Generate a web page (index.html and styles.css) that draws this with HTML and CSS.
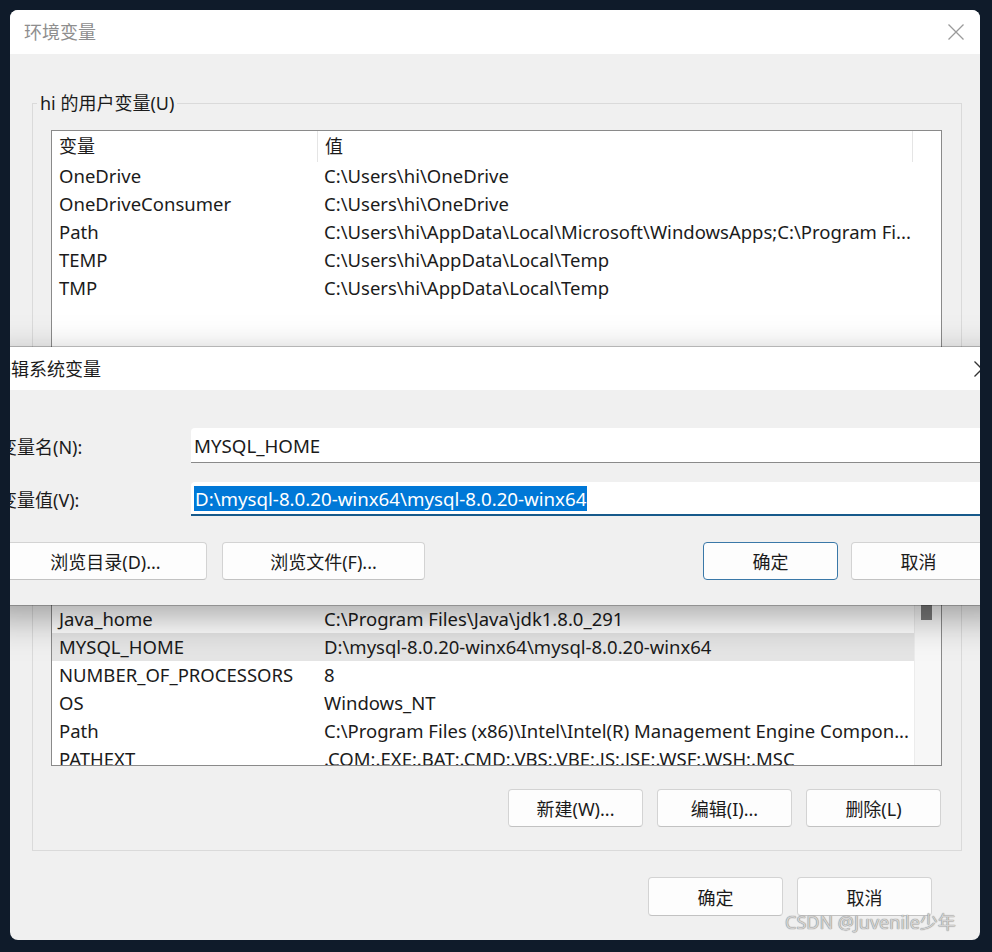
FILE: index.html
```html
<!DOCTYPE html>
<html lang="zh-CN">
<head>
    <meta charset="UTF-8">
    <meta name="viewport" content="width=device-width, initial-scale=1.0">
    <title>环境变量</title>
    <link rel="stylesheet" href="styles.css">
</head>
<body>
    <div class="desktop">
        <div class="window">
            <div class="titlebar">
                <span class="title muted">环境变量</span>
                <svg class="close" width="18" height="18" viewBox="0 0 18 18">
                    <path d="M1.5 1.5L16.5 16.5M16.5 1.5L1.5 16.5"/>
                </svg>
            </div>

            <div class="window-body">
                <fieldset class="group group-user">
                    <legend>hi 的用户变量(U)</legend>
                    <div class="list list-user">
                        <div class="list-head"><span>变量</span><span>值</span><span></span></div>
                        <div class="row"><span>OneDrive</span><span>C:\Users\hi\OneDrive</span></div>
                        <div class="row"><span>OneDriveConsumer</span><span>C:\Users\hi\OneDrive</span></div>
                        <div class="row"><span>Path</span><span>C:\Users\hi\AppData\Local\Microsoft\WindowsApps;C:\Program Fi...</span></div>
                        <div class="row"><span>TEMP</span><span>C:\Users\hi\AppData\Local\Temp</span></div>
                        <div class="row"><span>TMP</span><span>C:\Users\hi\AppData\Local\Temp</span></div>
                    </div>
                </fieldset>

                <fieldset class="group group-sys">
                    <legend>系统变量(S)</legend>
                    <div class="list list-sys">
                        <div class="list-rows">
                            <div class="list-head"><span>变量</span><span>值</span></div>
                            <div class="row"><span>CLASSPATH</span><span>.;%JAVA_HOME%\lib;%JAVA_HOME%\lib\tools.jar</span></div>
                            <div class="row"><span>ComSpec</span><span>C:\Windows\system32\cmd.exe</span></div>
                            <div class="row"><span>DriverData</span><span>C:\Windows\System32\Drivers\DriverData</span></div>
                            <div class="row"><span>INTEL_DEV_REDIST</span><span>C:\Program Files (x86)\Common Files\Intel\Shared Libraries\</span></div>
                            <div class="row"><span>JAVA_HOME</span><span>C:\Program Files\Java\jdk1.8.0_291</span></div>
                            <div class="row"><span>Java_home</span><span>C:\Program Files\Java\jdk1.8.0_291</span></div>
                            <div class="row selected"><span>MYSQL_HOME</span><span>D:\mysql-8.0.20-winx64\mysql-8.0.20-winx64</span></div>
                            <div class="row"><span>NUMBER_OF_PROCESSORS</span><span>8</span></div>
                            <div class="row"><span>OS</span><span>Windows_NT</span></div>
                            <div class="row"><span>Path</span><span>C:\Program Files (x86)\Intel\Intel(R) Management Engine Compon...</span></div>
                            <div class="row"><span>PATHEXT</span><span>.COM;.EXE;.BAT;.CMD;.VBS;.VBE;.JS;.JSE;.WSF;.WSH;.MSC</span></div>
                        </div>
                        <div class="scrollbar"><div class="thumb"></div></div>
                    </div>
                    <div class="btn-row">
                        <button class="btn">新建(W)...</button>
                        <button class="btn">编辑(I)...</button>
                        <button class="btn">删除(L)</button>
                    </div>
                </fieldset>

                <div class="btn-row footer">
                    <button class="btn">确定</button>
                    <button class="btn">取消</button>
                </div>
            </div>

            <!-- 编辑系统变量 dialog, on top of the main window -->
            <div class="dialog">
                <div class="dialog-titlebar">
                    <span class="title">编辑系统变量</span>
                    <svg class="close dark" width="18" height="18" viewBox="0 0 18 18">
                        <path d="M1.5 1.5L16.5 16.5M16.5 1.5L1.5 16.5"/>
                    </svg>
                </div>
                <div class="dialog-body">
                    <div class="field">
                        <label>变量名(N):</label>
                        <div class="input"><span>MYSQL_HOME</span></div>
                    </div>
                    <div class="field">
                        <label>变量值(V):</label>
                        <div class="input focused"><span class="sel">D:\mysql-8.0.20-winx64\mysql-8.0.20-winx64</span></div>
                    </div>
                    <div class="dialog-actions">
                        <button class="btn btn-wide">浏览目录(D)...</button>
                        <button class="btn btn-wide">浏览文件(F)...</button>
                        <span class="spacer"></span>
                        <button class="btn btn-default">确定</button>
                        <button class="btn">取消</button>
                    </div>
                </div>
            </div>
        </div>

        <div class="watermark">CSDN @Juvenile少年</div>
    </div>
</body>
</html>
```

FILE: styles.css
```css
* {
    box-sizing: border-box;
}
body {
    margin: 0;
    background-color: #0f1b2a;
    font-family: "Noto Sans", "Noto Sans CJK SC", sans-serif;
    font-size: 18px;
    color: #1b1b1b;
}
.desktop {
    position: relative;
    width: 992px;
    height: 952px;
    padding: 10px 12px 12px 10px;
    overflow: hidden;
}
.window {
    position: relative;
    width: 970px;
    height: 930px;
    background: #f0f0f0;
    border-radius: 8px;
    overflow: hidden;
}
.titlebar {
    height: 44px;
    background: #fff;
    display: flex;
    align-items: center;
    justify-content: space-between;
    padding: 0 15px 0 14px;
}
.title {
    line-height: 24px;
}
.muted {
    color: #8e8e8e;
}
.close path {
    stroke: #9a9a9a;
    stroke-width: 1.3;
    fill: none;
}
.close.dark path {
    stroke: #333;
}
.window-body {
    padding: 37px 18px 0 22px;
}
.group {
    margin: 0;
    min-width: 0;
    border: 1px solid #dadada;
    padding: 15px 19px 12px 18px;
}
.group legend {
    margin-left: -14px;
    padding: 0 3px;
    line-height: 24px;
}
.group-sys {
    margin-top: 21px;
    padding-bottom: 23px;
}
.list {
    background: #fff;
    border: 1px solid #8a8a8a;
    overflow: hidden;
}
.list-user {
    height: 230px;
}
.list-sys {
    height: 333px;
    display: flex;
}
.list-rows {
    width: 862px;
}
.list-head {
    display: grid;
    grid-template-columns: 266px 595px 1fr;
    height: 31px;
}
.list-head span {
    line-height: 31px;
    padding-left: 7px;
}
.list-head span:nth-child(1),
.list-head span:nth-child(2) {
    border-right: 1px solid #e5e5e5;
}
.row {
    display: grid;
    grid-template-columns: 266px 595px;
    height: 28px;
    line-height: 28px;
    font-size: 18.5px;
}
.row span {
    padding-left: 7px;
    white-space: nowrap;
    overflow: hidden;
}
.row span:nth-child(2) {
    padding-left: 6px;
}
.row.selected {
    background: #e5e5e5;
}
.scrollbar {
    flex: 1;
    background: #f7f7f7;
    border-left: 1px solid #ececec;
}
.thumb {
    width: 11px;
    height: 40px;
    margin: 146px 0 0 6px;
    background: #7a7a7a;
}
.btn-row {
    display: flex;
    justify-content: flex-end;
    gap: 14px;
    margin-top: 23px;
    padding-right: 1px;
}
.footer {
    margin-top: 26px;
    padding-right: 30px;
}
.footer .btn {
    height: 39px;
}
.btn {
    width: 135px;
    height: 38px;
    padding: 0;
    background: #fdfdfd;
    border: 1px solid #d3d3d3;
    border-bottom-color: #c2c2c2;
    border-radius: 4px;
    font-family: inherit;
    font-size: 18px;
    color: #1b1b1b;
}
.btn-wide {
    width: 203px;
}
.btn-default {
    border-color: #3a78a8;
}

/* dialog */
.dialog {
    position: absolute;
    left: -32px;
    top: 337px;
    width: 1040px;
    height: 258px;
    background: #f0f0f0;
    box-shadow: 0 0 0 1px rgba(0,0,0,0.22), 0 12px 36px rgba(0,0,0,0.36);
}
.dialog-titlebar {
    height: 43px;
    background: #fff;
    display: flex;
    align-items: center;
    justify-content: space-between;
    padding: 0 27px 0 15px;
}
.dialog-body {
    padding: 38px 32px 0 21px;
}
.field {
    display: grid;
    grid-template-columns: 192px 1fr;
    align-items: center;
    margin-bottom: 19px;
}
.field + .field {
    margin-bottom: 26px;
}
.input {
    height: 35px;
    background: #fff;
    border-bottom: 1px solid #8a8a8a;
    border-radius: 4px 4px 0 0;
    padding-left: 3px;
    display: flex;
    align-items: center;
    font-size: 18.7px;
}
.input.focused {
    height: 34px;
    border-bottom: 2px solid #175a8b;
}
.sel {
    background: #0078d7;
    color: #fff;
    line-height: 25px;
    padding: 0 1px;
}
.dialog-actions {
    display: flex;
    gap: 15px;
    padding-left: 5px;
}
.dialog-actions .spacer {
    flex: 1;
}
.dialog-actions .btn-default {
    margin-right: -2px;
}

.watermark {
    position: absolute;
    left: 785px;
    top: 908px;
    font-size: 18px;
    color: #d2d2d2;
    text-shadow: 0 0 1px #8a8a8a, 0 0 1px #8a8a8a;
}
```
